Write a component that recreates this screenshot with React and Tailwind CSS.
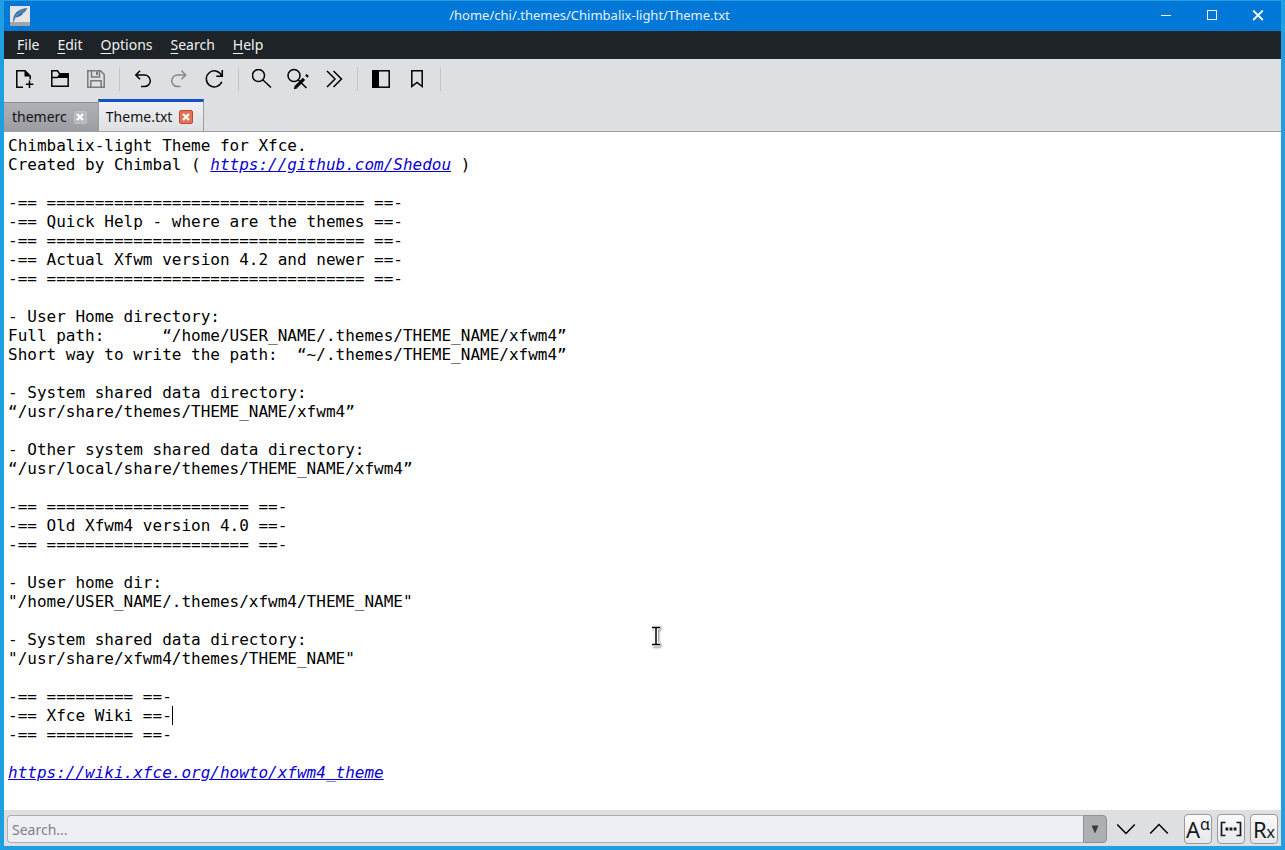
import { useState } from "react";

const URL_PATTERN = /(https?:\/\/\S+)/g;
const CARET_LINE = 30;

const themeText = `Chimbalix-light Theme for Xfce.
Created by Chimbal ( https://github.com/Shedou )

-== ================================= ==-
-== Quick Help - where are the themes ==-
-== ================================= ==-
-== Actual Xfwm version 4.2 and newer ==-
-== ================================= ==-

- User Home directory:
Full path:      “/home/USER_NAME/.themes/THEME_NAME/xfwm4”
Short way to write the path:  “~/.themes/THEME_NAME/xfwm4”

- System shared data directory:
“/usr/share/themes/THEME_NAME/xfwm4”

- Other system shared data directory:
“/usr/local/share/themes/THEME_NAME/xfwm4”

-== ===================== ==-
-== Old Xfwm4 version 4.0 ==-
-== ===================== ==-

- User home dir:
"/home/USER_NAME/.themes/xfwm4/THEME_NAME"

- System shared data directory:
"/usr/share/xfwm4/themes/THEME_NAME"

-== ========= ==-
-== Xfce Wiki ==-
-== ========= ==-

https://wiki.xfce.org/howto/xfwm4_theme`;

const menus = ["File", "Edit", "Options", "Search", "Help"];

function Icon({ children, className = "text-black" }) {
  return (
    <svg width="20" height="20" viewBox="0 0 20 20" fill="none" stroke="currentColor" strokeWidth="1.5" className={className} aria-hidden="true">
      {children}
    </svg>
  );
}

const toolGroups = [
  [
    {
      label: "New",
      icon: (
        <Icon>
          <path d="M9 18.2H2.8V1.8H11L16.2 7v3.5" />
          <path d="M10.5 1.5V7.5H16.8Z" fill="currentColor" stroke="none" />
          <path d="M15.5 11.5V19M11.8 15.2H19.3" />
        </Icon>
      ),
    },
    {
      label: "Open",
      icon: (
        <Icon>
          <path d="M1.8 17.2V1.8H7.5L9.5 4.8H18.2V17.2Z" />
          <path d="M1.8 8.5H7.5L9.5 6.5" />
          <path d="M9.5 4H18.8V9H7.5Z" fill="currentColor" stroke="none" />
        </Icon>
      ),
    },
    {
      label: "Save",
      disabled: true,
      icon: (
        <Icon className="text-[#77797c]">
          <path d="M1.8 1.8H14.5L18.2 5.5V18.2H1.8Z" />
          <path d="M5.5 2V8H13.5V2M4.8 18V11.8H15.2V18" />
          <path d="M11 2.5V6" strokeWidth="2" />
        </Icon>
      ),
    },
  ],
  [
    {
      label: "Undo",
      icon: (
        <Icon>
          <path d="M7 1.8L2.8 6L7 10.2M2.8 6H11.5A5.8 5.8 0 0 1 11.5 17.6H8" />
        </Icon>
      ),
    },
    {
      label: "Redo",
      disabled: true,
      icon: (
        <Icon className="text-[#858789]">
          <path d="M12.5 1.8L16.7 6L12.5 10.2M16.7 6H8.5A5.8 5.8 0 0 0 8.5 17.6H11.5" />
        </Icon>
      ),
    },
    {
      label: "Reload",
      icon: (
        <Icon>
          <path d="M17.3 1V7.2H11.3M16.8 7A8 8 0 1 0 16.8 12.8" />
        </Icon>
      ),
    },
  ],
  [
    {
      label: "Find",
      icon: (
        <Icon>
          <circle cx="6.5" cy="6.5" r="6" />
          <path d="M10.7 10.8L19 18.5" />
        </Icon>
      ),
    },
    {
      label: "Find and replace",
      icon: (
        <svg width="24" height="22" viewBox="0 0 24 22" fill="none" stroke="currentColor" strokeWidth="1.5" aria-hidden="true">
          <circle cx="8" cy="7.5" r="6" />
          <path d="M12.3 12L20.5 20" />
          <path d="M10 18.8L18 10.8" strokeWidth="3.2" />
          <path d="M7.8 21.3L8.8 17.6L11.5 20.3Z" fill="currentColor" stroke="none" />
          <path d="M20.2 8.6L21.8 7" strokeWidth="3" />
        </svg>
      ),
    },
    {
      label: "Go to line",
      icon: (
        <Icon>
          <path d="M3 2L11 10L3 18M9.5 2L17.5 10L9.5 18" />
        </Icon>
      ),
    },
  ],
  [
    {
      label: "Side pane",
      icon: (
        <Icon>
          <rect x="1.8" y="1.8" width="16.4" height="16.4" />
          <path d="M1 1H8V19H1Z" fill="currentColor" stroke="none" />
        </Icon>
      ),
    },
    {
      label: "Bookmark",
      icon: (
        <Icon>
          <path d="M4.8 1.8H15.2V17.5L10 13.4L4.8 17.5Z" />
        </Icon>
      ),
    },
  ],
];

function FeatherLogo() {
  return (
    <svg width="20" height="20" viewBox="0 0 20 20" aria-hidden="true">
      <rect width="20" height="20" fill="#e4e5e6" />
      <rect y="16" width="20" height="4" fill="#a3a5a7" />
      <path d="M3 15.5C3 8 7 3 17.5 2C16 4.5 15.5 5.5 14 6.5L12.5 7L13 8C11 10 9 11 6 11.5C5 12.5 4.5 13.5 4 15.5Z" fill="#3f73a8" />
      <path d="M4 14C6 9 9 6 13.5 4" stroke="#8fb3d6" strokeWidth="0.6" fill="none" />
    </svg>
  );
}

function TitleBar() {
  const windowButton = "flex h-full w-[46px] items-center justify-center hover:bg-white/15";
  return (
    <header className="flex h-[30px] items-center bg-[#0178d7] text-white">
      <div className="flex w-8 justify-center">
        <FeatherLogo />
      </div>
      <h1 className="flex-1 truncate text-center text-[13px] text-[#e3f1fc]">/home/chi/.themes/Chimbalix-light/Theme.txt</h1>
      <button type="button" aria-label="Minimize" className={windowButton}>
        <svg width="12" height="12" viewBox="0 0 12 12" stroke="currentColor">
          <path d="M1 5.5H11" />
        </svg>
      </button>
      <button type="button" aria-label="Maximize" className={windowButton}>
        <svg width="12" height="12" viewBox="0 0 12 12" fill="none" stroke="currentColor">
          <rect x="1.5" y="0.5" width="9" height="9" />
        </svg>
      </button>
      <button type="button" aria-label="Close" className={windowButton}>
        <svg width="12" height="12" viewBox="0 0 12 12" stroke="currentColor" strokeWidth="1.8">
          <path d="M1.2 0.5L10.8 10M10.8 0.5L1.2 10" />
        </svg>
      </button>
    </header>
  );
}

function CloseMark() {
  return (
    <svg width="8" height="8" viewBox="0 0 8 8" stroke="white" strokeWidth="2.2" aria-hidden="true">
      <path d="M1 1L7 7M7 1L1 7" />
    </svg>
  );
}

function Tabs({ active, onSelect }) {
  return (
    <div className="flex h-8 items-end">
      {["themerc", "Theme.txt"].map((name) => {
        const selected = name === active;
        return (
          <div
            key={name}
            className={`flex items-center gap-[7px] text-sm ${
              selected
                ? "h-8 border-x border-t-[3px] border-x-[#9b9da1] border-t-[#1450c8] bg-linear-to-b from-[#eff0f3] to-[#dfe0e4] pr-[10px] pl-[7px]"
                : "h-[29px] border-t border-t-[#8b8d91] bg-linear-to-b from-[#b0b1b6] to-[#9c9da3] pr-[11px] pl-2"
            }`}
          >
            <button type="button" onClick={() => onSelect(name)} className="text-[#111]">
              {name}
            </button>
            <button
              type="button"
              aria-label={`Close ${name}`}
              className={`flex items-center justify-center rounded-xs border ${
                selected ? "size-[14px] border-[#bd4a31] bg-[#e27454]" : "size-[13px] border-[#bfc0c4] bg-[#b7b8bc]"
              }`}
            >
              <CloseMark />
            </button>
          </div>
        );
      })}
    </div>
  );
}

function Line({ text, caret }) {
  return (
    <div className="min-h-[19px]">
      {text.split(URL_PATTERN).map((part, i) =>
        part.startsWith("http") ? (
          <a key={i} href={part} className="text-[#0a00d0] italic underline">
            {part}
          </a>
        ) : (
          part
        )
      )}
      {caret && <span className="inline-block h-[19px] w-px bg-black align-top" />}
    </div>
  );
}

function SearchBar() {
  const [query, setQuery] = useState("");
  const arrowButton = "flex h-7 w-[33px] items-center justify-center text-black";
  const toggle = "flex h-[30px] w-7 items-center justify-center rounded border border-[#97999c] bg-linear-to-b from-[#fbfbfc] to-[#e6e7ea] text-[#15191b]";

  return (
    <form className="flex h-9 items-center bg-[#dddfe3] px-[3px] pt-1 pb-[2px]" onSubmit={(e) => e.preventDefault()}>
      <input
        type="text"
        aria-label="Search"
        placeholder="Search..."
        value={query}
        onChange={(e) => setQuery(e.target.value)}
        className="h-7 min-w-0 flex-1 rounded-l border border-r-0 border-[#acaeb1] bg-[#eeeff4] px-1 text-sm outline-none placeholder:text-[#818387]"
      />
      <button type="button" aria-label="Search history" className="flex h-7 w-6 items-center justify-center rounded-r border border-[#8e9194] bg-[#adb0b3]">
        <svg width="8" height="9" viewBox="0 0 8 9" aria-hidden="true">
          <path d="M0.5 0.5H7.5L4 8.5Z" fill="#383b3e" />
        </svg>
      </button>
      <div className="flex px-[2px]">
        <button type="button" aria-label="Next match" className={arrowButton}>
          <Icon>
            <path d="M1.2 5.5L10 14.5L18.8 5.5" />
          </Icon>
        </button>
        <button type="button" aria-label="Previous match" className={arrowButton}>
          <Icon>
            <path d="M1.2 14.5L10 5.5L18.8 14.5" />
          </Icon>
        </button>
      </div>
      <div className="ml-[7px] flex gap-[5px]">
        <button type="button" aria-label="Match case" className={toggle}>
          <span className="text-[22px] leading-7 whitespace-nowrap">
            A<sup className="text-base">ɑ</sup>
          </span>
        </button>
        <button type="button" aria-label="Match whole word" className={toggle}>
          <svg width="22" height="18" viewBox="0 0 22 18" fill="none" stroke="currentColor" strokeWidth="1.7" aria-hidden="true">
            <path d="M5.5 2.5H1.5V15.5H5.5M16.5 2.5H20.5V15.5H16.5" />
            <path d="M5.5 9H8.3M9.6 9H12.4M13.7 9H16.5" strokeWidth="2.8" />
          </svg>
        </button>
        <button type="button" aria-label="Regular expression" className={toggle}>
          <span className="text-[22px] leading-7 whitespace-nowrap">
            R<span className="text-base">x</span>
          </span>
        </button>
      </div>
    </form>
  );
}

function App() {
  const [tab, setTab] = useState("Theme.txt");

  return (
    <div className="flex h-screen flex-col border-4 border-t border-[#1f9fe2] bg-[#dddfe3] font-['Noto_Sans',sans-serif]">
      <TitleBar />

      <nav className="flex h-7 items-center bg-[#1d2326] px-[3px] text-sm text-[#f0f1f2]">
        {menus.map((name) => (
          <button key={name} type="button" className="pr-[9px] pl-[10px] hover:bg-white/10 not-first:pl-[9px]">
            <span className="underline underline-offset-3">{name[0]}</span>
            {name.slice(1)}
          </button>
        ))}
      </nav>

      <div className="flex h-10 items-center px-[2px]">
        {toolGroups.map((group, i) => (
          <div key={i} className="flex items-center">
            {group.map(({ label, icon, disabled }) => (
              <button key={label} type="button" aria-label={label} disabled={disabled} className="flex h-9 w-9 items-center justify-center">
                {icon}
              </button>
            ))}
            <span className="mx-[5px] h-6 w-px bg-[#c3c5c8]" />
          </div>
        ))}
      </div>

      <Tabs active={tab} onSelect={setTab} />

      <main className="relative min-h-0 flex-1 border-t border-[#9fa0a4] bg-white">
        <div
          role="textbox"
          aria-multiline="true"
          aria-label="Document"
          tabIndex={0}
          className="h-full overflow-hidden px-1 pt-1 font-['DejaVu_Sans_Mono',monospace] text-base leading-[19px] whitespace-pre text-black outline-none"
        >
          {themeText.split("\n").map((text, i) => (
            <Line key={i} text={text} caret={i === CARET_LINE} />
          ))}
        </div>

        {/* Mouse pointer */}
        <svg className="pointer-events-none absolute top-[493px] left-[646px] drop-shadow-[1px_1px_1px_rgba(0,0,0,0.5)]" width="12" height="22" viewBox="0 0 12 22" fill="none" aria-hidden="true">
          <path d="M2 2.5H10M2 19.5H10M6 2.5V19.5" stroke="white" strokeWidth="4" />
          <path d="M2 2.5H10M2 19.5H10M6 3V19" stroke="black" strokeWidth="1.5" />
        </svg>
      </main>

      <SearchBar />
    </div>
  );
}

export default App;
